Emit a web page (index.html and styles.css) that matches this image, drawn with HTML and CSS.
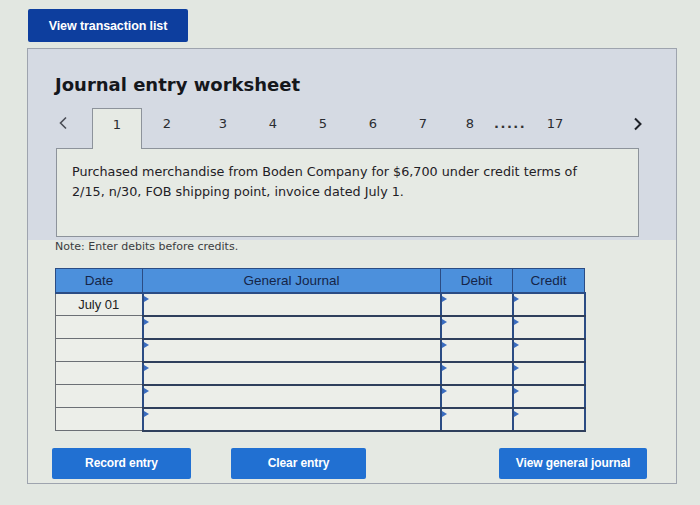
FILE: index.html
```html
<!DOCTYPE html>
<html lang="en">
<head>
    <meta charset="UTF-8">
    <title>Journal entry worksheet</title>
    <link rel="stylesheet" href="styles.css">
</head>
<body>
    <div class="page">
        <button class="btn btn-dark">View transaction list</button>

        <div class="worksheet">
            <div class="ws-head">
                <h1>Journal entry worksheet</h1>
                <div class="tabs">
                    <span class="arrow prev">
                        <svg width="10" height="14" viewBox="0 0 10 14"><path d="M8 1.5 2.5 7 8 12.5" fill="none" stroke="#4a4d55" stroke-width="1.6"/></svg>
                    </span>
                    <span class="tab active">1</span>
                    <span class="tab spaced">2</span>
                    <span class="tab">3</span>
                    <span class="tab">4</span>
                    <span class="tab">5</span>
                    <span class="tab">6</span>
                    <span class="tab">7</span>
                    <span class="tab short">8</span>
                    <span class="dots">.....</span>
                    <span class="tab">17</span>
                    <span class="arrow next">
                        <svg width="10" height="14" viewBox="0 0 10 14"><path d="M2 1.5 7.5 7 2 12.5" fill="none" stroke="#1e2128" stroke-width="2"/></svg>
                    </span>
                </div>
                <div class="prompt">
                    Purchased merchandise from Boden Company for $6,700 under credit terms of<br>
                    2/15, n/30, FOB shipping point, invoice dated July 1.
                </div>
            </div>

            <div class="ws-body">
                <p class="note">Note: Enter debits before credits.</p>

                <table class="journal">
                    <thead>
                        <tr>
                            <th class="col-date">Date</th>
                            <th class="col-gj">General Journal</th>
                            <th class="col-amt">Debit</th>
                            <th class="col-amt">Credit</th>
                        </tr>
                    </thead>
                    <tbody>
                        <tr><td class="date">July 01</td><td class="cell"></td><td class="cell"></td><td class="cell"></td></tr>
                        <tr><td class="date"></td><td class="cell"></td><td class="cell"></td><td class="cell"></td></tr>
                        <tr><td class="date"></td><td class="cell"></td><td class="cell"></td><td class="cell"></td></tr>
                        <tr><td class="date"></td><td class="cell"></td><td class="cell"></td><td class="cell"></td></tr>
                        <tr><td class="date"></td><td class="cell"></td><td class="cell"></td><td class="cell"></td></tr>
                        <tr><td class="date"></td><td class="cell"></td><td class="cell"></td><td class="cell"></td></tr>
                    </tbody>
                </table>

                <div class="actions">
                    <button class="btn btn-record">Record entry</button>
                    <button class="btn btn-clear">Clear entry</button>
                    <button class="btn btn-view">View general journal</button>
                </div>
            </div>
        </div>
    </div>
</body>
</html>
```

FILE: styles.css
```css
* {
    box-sizing: border-box;
}

body {
    margin: 0;
    background-color: #e2e7e1;
    font-family: "DejaVu Sans", Verdana, sans-serif;
    color: #222;
}

.page {
    padding: 9px 0 0 27px;
}

.btn {
    border: none;
    border-radius: 2px;
    color: #fff;
    font-family: "Liberation Sans", Arial, sans-serif;
    font-weight: bold;
    font-size: 12px;
    letter-spacing: -0.1px;
    cursor: pointer;
    height: 31px;
    background-color: #2170d2;
}

.btn-dark {
    display: block;
    margin-left: 1px;
    width: 160px;
    height: 33px;
    background-color: #0d3e9e;
    font-size: 12.5px;
}

.worksheet {
    margin-top: 6px;
    width: 650px;
    height: 436px;
    border: 1px solid #9ea4ae;
    background-color: #e5e9e3;
}

/* title, step tabs and the transaction text */
.ws-head {
    background-color: #d5dae3;
    padding: 24px 27px 3px 27px;
}

h1 {
    margin: 0;
    font-size: 18px;
    line-height: 24px;
    color: #15171c;
}

.tabs {
    display: flex;
    height: 40px;
    margin-top: 11px;
    font-size: 13px;
    line-height: 16px;
}

.tabs > span {
    padding-top: 8px;
    text-align: center;
}

.arrow {
    display: flex;
    padding-top: 8px;
}

.arrow.prev {
    width: 37px;
    padding-left: 3px;
}

.arrow.next {
    margin-left: auto;
    width: 16px;
    padding-top: 9px;
}

.tab {
    width: 50px;
    color: #2a2c31;
}

.tab.spaced {
    margin-right: 6px;
}

.tab.short {
    width: 44px;
}

.tab.active {
    position: relative;
    z-index: 1;
    height: 41px;
    background-color: #e6eae4;
    border: 1px solid #8d939b;
    border-bottom: none;
}

.dots {
    width: 38px;
    text-align: left !important;
    padding-left: 2px;
    font-weight: bold;
    letter-spacing: 1.5px;
    color: #333;
}

.prompt {
    margin: 0 10px 0 1px;
    height: 89px;
    padding: 13px 15px;
    border: 1px solid #8d939b;
    background-color: #e6eae4;
    font-size: 12.75px;
    line-height: 20px;
    color: #1f2126;
}

/* journal table and buttons */
.ws-body {
    padding: 0 27px;
}

.note {
    margin: 0 0 14px 0;
    font-size: 11px;
    line-height: 14px;
    color: #3a3c40;
}

.journal {
    border-collapse: collapse;
    font-family: "Liberation Sans", Arial, sans-serif;
    font-size: 13px;
}

.journal th {
    height: 24px;
    padding: 0;
    background-color: #4c90dc;
    color: #152548;
    font-size: 13.5px;
    font-weight: normal;
    border: 1px solid #2b4c84;
    border-bottom: 2px solid #2b4c84;
}

.col-date { width: 87px; }
.col-gj { width: 298px; }
.col-amt { width: 72px; }

.journal td {
    height: 23px;
    padding: 0;
    background-color: #eceee9;
}

.journal td.date {
    text-align: center;
    color: #222;
    border-left: 1px solid #6b6f75;
    border-bottom: 1px solid #6b6f75;
}

.journal td.cell {
    position: relative;
    border-left: 2px solid #2b4c84;
    border-right: 2px solid #2b4c84;
    border-bottom: 2px solid #2f3f5c;
}

/* small marker in the corner of each entry field */
.journal td.cell::before {
    content: "";
    position: absolute;
    top: 2px;
    left: 0;
    border-left: 5px solid #3a6cc0;
    border-top: 3px solid transparent;
    border-bottom: 3px solid transparent;
}

.actions {
    display: flex;
    margin: 16px 2px 0 -3px;
}

.btn-record { width: 139px; }

.btn-clear {
    width: 135px;
    margin-left: 40px;
}

.btn-view {
    width: 148px;
    margin-left: auto;
}
```
